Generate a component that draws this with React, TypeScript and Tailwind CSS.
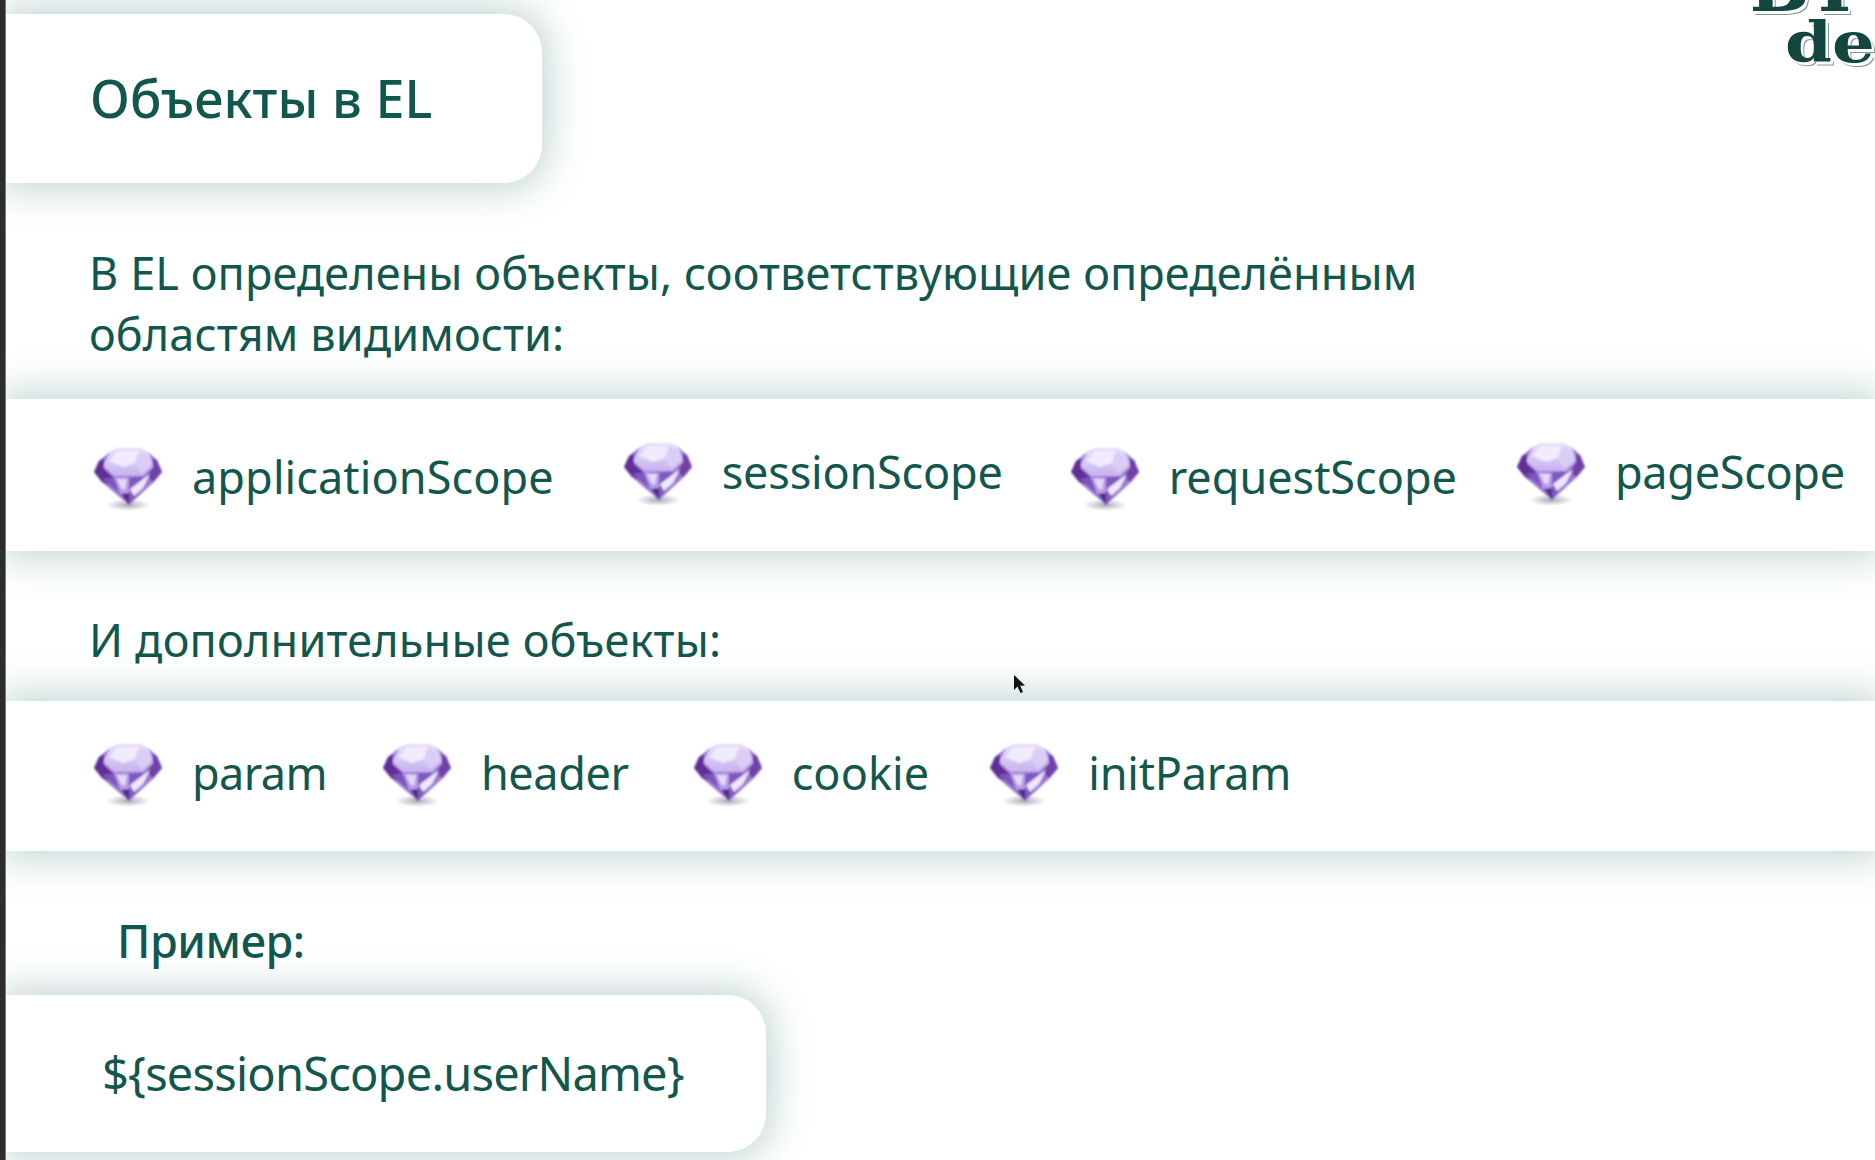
const font = { fontFamily: '"Noto Sans", sans-serif' };

function Gem() {
  return (
    <svg width="70" height="66" viewBox="0 0 70 66" className="shrink-0 translate-y-[2px]">
      <defs>
        <linearGradient id="gemTop" x1="0" y1="0" x2="0" y2="1">
          <stop offset="0" stopColor="#e9e0fb" />
          <stop offset="1" stopColor="#c8b2f0" />
        </linearGradient>
        <radialGradient id="gemShadow">
          <stop offset="0" stopColor="#5d5a70" stopOpacity="0.5" />
          <stop offset="1" stopColor="#5d5a70" stopOpacity="0" />
        </radialGradient>
        <filter id="gemBlur" x="-10%" y="-10%" width="120%" height="120%">
          <feGaussianBlur stdDeviation="0.8" />
        </filter>
      </defs>
      <ellipse cx="35" cy="59" rx="22" ry="6" fill="url(#gemShadow)" />
      <g filter="url(#gemBlur)">
        <polygon points="1,26 6,15 17,6 26,2 46,2 55,6 64,14 69,26 62,35 36,59 9,36" fill="#9a78d2" />
        <polygon points="17,6 26,2 46,2 55,6 61,19 50,30 21,30 10,20" fill="url(#gemTop)" />
        <polygon points="25,5 46,5 42,17 30,21 16,15" fill="#f1ebfd" />
        <polygon points="46,6 54,9 58,19 48,27 42,17" fill="#dccdf6" />
        <polygon points="1,26 6,15 11,12 11,23 20,31 14,38 9,36" fill="#5f2f96" />
        <polygon points="69,26 64,14 59,12 60,22 54,30 60,36" fill="#6f3fa8" />
        <polygon points="9,33 21,31 27,47" fill="#7e55bc" />
        <polygon points="21,31 36,32 36,59 27,47" fill="#b79cea" />
        <polygon points="36,32 50,30 45,47 36,59" fill="#8059bf" />
        <polygon points="37,43 57,28 50,42 41,50" fill="#efe8fc" />
        <polygon points="24,33 34,33 32,44 28,42" fill="#e4d9f8" />
        <polygon points="28,48 36,59 36,47" fill="#4f2f86" />
      </g>
    </svg>
  );
}

function Item({ label, className, textClass }: { label: string; className?: string; textClass?: string }) {
  return (
    <div className={`flex items-center gap-[29px] ${className ?? ""}`}>
      <Gem />
      <span className={`text-[45px] leading-none text-[#12574e] ${textClass ?? "tracking-[0.1px]"}`}>{label}</span>
    </div>
  );
}

const bandShadow = "shadow-[0_0_36px_6px_rgba(70,130,125,0.34)]";

export default function App() {
  return (
    <div className="relative flex h-[1160px] w-[1875px] overflow-hidden bg-white" style={font}>
      <div className="relative z-10 w-[6px] shrink-0 border-r border-[#7a7a7a] bg-[#2d2d2d]" />
      <div className="flex min-w-0 flex-1 flex-col text-[#12574e]">
        <div className={`mt-[14px] flex h-[169px] w-[536px] items-center rounded-r-[38px] bg-white pl-[84px] ${bandShadow}`}>
          <h1 className="-translate-y-[1px] text-[52px] font-medium leading-none tracking-[0.1px]">Объекты в EL</h1>
        </div>

        <p className="mt-[59px] pl-[83px] text-[45px] leading-[61px] tracking-[0.1px]">
          В EL определены объекты, соответствующие определённым
          <br />
          областям видимости:
        </p>

        <div className={`mt-[35px] flex h-[152px] items-center gap-[69px] bg-white pl-[87px] pt-[3px] ${bandShadow}`}>
          <Item label="applicationScope" />
          <Item label="sessionScope" className="-translate-y-[5px]" textClass="tracking-[-0.2px]" />
          <Item label="requestScope" className="-ml-[2px]" textClass="tracking-[0px]" />
          <Item label="pageScope" className="-ml-[10px] -translate-y-[5px]" textClass="tracking-[-0.3px]" />
        </div>

        <p className="mt-[58px] pb-[1px] pl-[83px] text-[45px] leading-[61px] tracking-[0.2px]">И дополнительные объекты:</p>

        <div className={`mt-[30px] flex h-[150px] items-center gap-[57px] bg-white pb-[7px] pl-[87px] ${bandShadow}`}>
          <Item label="param" textClass="tracking-[-0.6px]" />
          <Item label="header" className="-ml-[2px]" textClass="tracking-[-0.4px]" />
          <Item label="cookie" className="ml-[7px]" />
          <Item label="initParam" className="ml-[3px]" textClass="tracking-[-0.2px]" />
        </div>

        <p className="mt-[59px] pb-[1px] pl-[111px] text-[45px] font-medium leading-[61px] tracking-[-0.4px]">Пример:</p>

        <div className={`mt-[23px] flex h-[157px] w-[760px] items-center rounded-r-[38px] bg-white pl-[96px] ${bandShadow}`}>
          <span className="text-[47px] leading-none tracking-[-0.8px]">{"${sessionScope.userName}"}</span>
        </div>
      </div>

      <div className="absolute right-0 top-0 h-[70px] w-[122px] overflow-hidden text-[#12463f] [text-shadow:2px_3px_0_#fff,3px_4px_0_#7d9a96]" style={{ fontFamily: '"DejaVu Serif", serif' }}>
        <span className="absolute left-[-4px] top-[-50px] text-[72px] font-bold leading-none tracking-[8px]">BI</span>
        <span className="absolute left-[32px] top-[14px] origin-left scale-x-[1.2] text-[56px] font-semibold leading-none">de</span>
      </div>

      <svg className="absolute left-[1013px] top-[674px]" width="14" height="22" viewBox="0 0 14 22">
        <path d="M1 1 L1 16 L4.5 12.5 L7.5 19 L10 18 L7.2 11.8 L12 11.5 Z" fill="#111" />
      </svg>
    </div>
  );
}
